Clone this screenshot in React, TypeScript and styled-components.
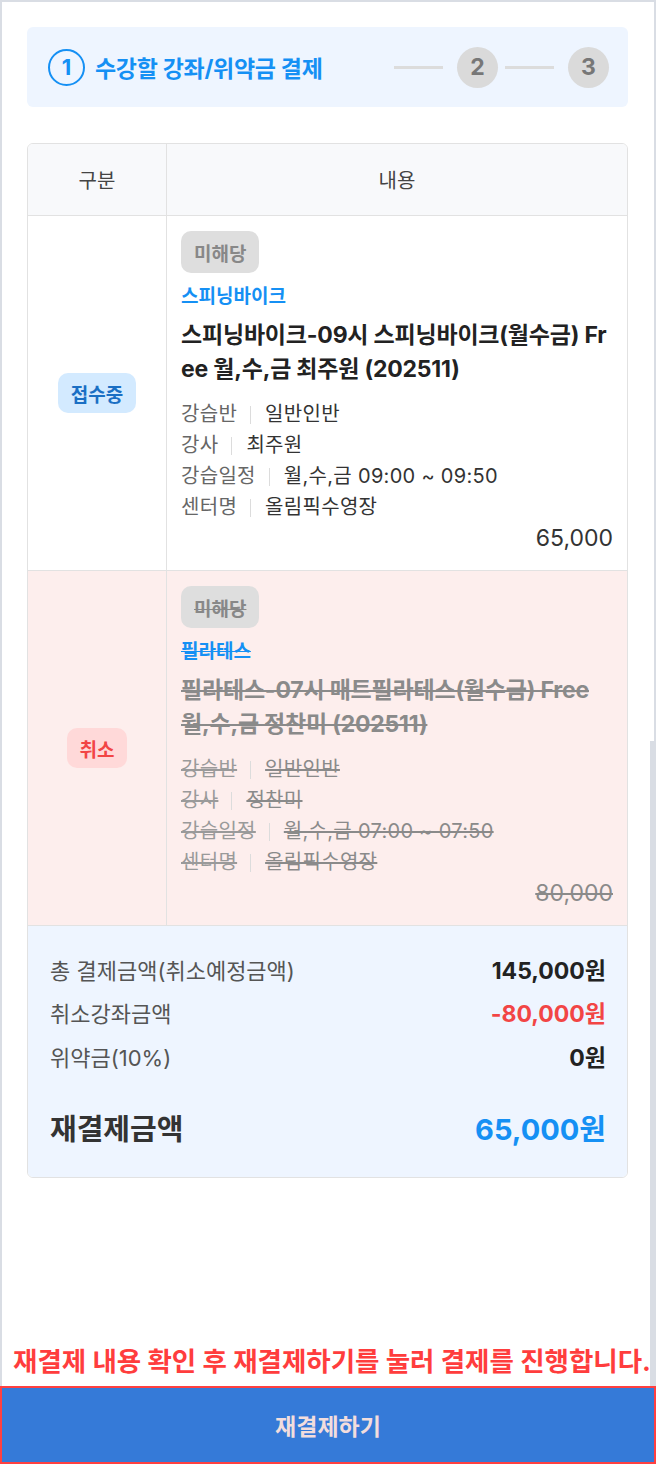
import React from "react";
import styled, { createGlobalStyle, css } from "styled-components";

const GlobalStyle = createGlobalStyle`
  html, body { margin: 0; padding: 0; background: #fff; }
  body { font-family: Inter, "Noto Sans CJK KR", sans-serif; color: #333; }
  * { box-sizing: border-box; }
`;

const BLUE = "#1590f4";
const RED = "#f24545";

const Page = styled.div`
  width: 656px;
  height: 1464px;
  display: flex;
  flex-direction: column;
`;

const Frame = styled.div`
  flex: 1;
  position: relative;
  display: flex;
  flex-direction: column;
  border: 2px solid #d9dde4;
  border-bottom: none;
  padding: 25px 26px 0 25px;
`;

const ScrollThumb = styled.div`
  position: absolute;
  right: 0;
  top: 739px;
  bottom: 0;
  width: 4px;
  background: #d9dde4;
`;

// stepper
const Stepper = styled.div`
  height: 80px;
  border-radius: 6px;
  background: #eef5ff;
  display: flex;
  align-items: center;
  padding: 0 19px 0 21px;
`;

const ActiveStep = styled.div`
  display: flex;
  align-items: center;
  gap: 10px;
  flex: 1;
`;

const ActiveNum = styled.div`
  width: 37px;
  height: 37px;
  border-radius: 50%;
  border: 2.5px solid ${BLUE};
  color: ${BLUE};
  font-size: 22px;
  font-weight: 700;
  display: flex;
  align-items: center;
  justify-content: center;
`;

const StepTitle = styled.div`
  color: ${BLUE};
  font-size: 23px;
  font-weight: 700;
  letter-spacing: -0.3px;
`;

const StepLine = styled.div<{ $first?: boolean }>`
  width: 49px;
  height: 3px;
  background: #dcdcdc;
  margin: 0 14px 0 ${(p) => (p.$first ? "0" : "7px")};
`;

const StepNum = styled.div`
  width: 41px;
  height: 41px;
  border-radius: 50%;
  background: #dadada;
  color: #777;
  font-size: 23px;
  font-weight: 700;
  display: flex;
  align-items: center;
  justify-content: center;
`;

// table
const Table = styled.div`
  margin-top: 36px;
  border: 1px solid #e2e2e2;
  border-radius: 6px;
  overflow: hidden;
`;

const Row = styled.div<{ $tone?: "head" | "cancel" }>`
  display: grid;
  grid-template-columns: 138px 1fr;
  border-bottom: 1px solid #e2e2e2;
  background: ${(p) =>
    p.$tone === "head" ? "#f8f9fb" : p.$tone === "cancel" ? "#fdeeed" : "#fff"};
`;

const HeadCell = styled.div`
  height: 71px;
  display: flex;
  align-items: center;
  justify-content: center;
  font-size: 20px;
  color: #444;
  & + & { border-left: 1px solid #e2e2e2; }
`;

const StatusCell = styled.div`
  display: flex;
  align-items: center;
  justify-content: center;
`;

const StatusBadge = styled.span<{ $cancel?: boolean }>`
  height: 40px;
  padding: 0 13px;
  border-radius: 10px;
  display: inline-flex;
  align-items: center;
  font-size: 19px;
  font-weight: 700;
  background: ${(p) => (p.$cancel ? "#ffd9d9" : "#d3eaff")};
  color: ${(p) => (p.$cancel ? RED : "#1a6fc4")};
`;

const ContentCell = styled.div`
  border-left: 1px solid #e2e2e2;
  padding: 15px 14px 16px 14px;
  display: flex;
  flex-direction: column;
  align-items: flex-start;
`;

const strike = css<{ $struck?: boolean }>`
  text-decoration: ${(p) => (p.$struck ? "line-through" : "none")};
`;

const GrayBadge = styled.span<{ $struck?: boolean }>`
  height: 42px;
  padding: 0 13px;
  border-radius: 10px;
  background: #dedede;
  color: #888;
  font-size: 19px;
  font-weight: 700;
  display: inline-flex;
  align-items: center;
  ${strike}
`;

const Category = styled.div<{ $struck?: boolean }>`
  margin-top: 11px;
  color: ${BLUE};
  font-size: 19px;
  font-weight: 700;
  line-height: 26px;
  ${strike}
`;

const CourseTitle = styled.div<{ $struck?: boolean }>`
  margin-top: 8px;
  font-size: 23px;
  font-weight: 700;
  line-height: 34px;
  letter-spacing: -0.2px;
  word-break: break-all;
  color: ${(p) => (p.$struck ? "#8a8a8a" : "#222")};
  ${strike}
`;

const Details = styled.div`
  margin-top: 13px;
  display: flex;
  flex-direction: column;
`;

const DetailLine = styled.div`
  display: flex;
  align-items: center;
  font-size: 20px;
  line-height: 31px;
  letter-spacing: 0.3px;
`;

const DetailLabel = styled.span<{ $struck?: boolean }>`
  color: ${(p) => (p.$struck ? "#9a9a9a" : "#666")};
  ${strike}
`;

const DetailValue = styled.span<{ $struck?: boolean }>`
  color: ${(p) => (p.$struck ? "#8a8a8a" : "#333")};
  ${strike}
`;

const Divider = styled.span`
  width: 1px;
  height: 18px;
  background: #dcdcdc;
  margin: 0 14px 0 13px;
`;

const Price = styled.div<{ $struck?: boolean }>`
  align-self: stretch;
  text-align: right;
  font-size: 23px;
  line-height: 31px;
  color: ${(p) => (p.$struck ? "#8a8a8a" : "#333")};
  ${strike}
`;

// summary
const Summary = styled.div`
  background: #eef5ff;
  padding: 21px 21px 25px 22px;
`;

const SumRow = styled.div`
  display: flex;
  justify-content: space-between;
  align-items: center;
  height: 43.5px;
`;

const SumLabel = styled.span`
  font-size: 22px;
  color: #555;
`;

const SumValue = styled.span<{ $red?: boolean }>`
  font-size: 23px;
  font-weight: 700;
  color: ${(p) => (p.$red ? RED : "#222")};
`;

const TotalRow = styled.div`
  margin-top: 24px;
  display: flex;
  justify-content: space-between;
  align-items: center;
  height: 50px;
`;

const TotalLabel = styled.span`
  font-size: 29px;
  font-weight: 700;
  color: #333;
`;

const TotalValue = styled.span`
  font-size: 29px;
  font-weight: 700;
  color: ${BLUE};
`;

const Notice = styled.div`
  margin-top: auto;
  padding-bottom: 8px;
  text-align: center;
  color: #ff3d3d;
  font-size: 26.5px;
  font-weight: 700;
  line-height: 34px;
  white-space: nowrap;
  margin-left: -14px;
  margin-right: -16px;
`;

const PayButton = styled.button`
  height: 78px;
  width: 100%;
  border: 2px solid #ff4040;
  background: #357ad8;
  color: #f2dddd;
  font-family: inherit;
  font-size: 23px;
  font-weight: 700;
`;

type Course = {
  status: string;
  cancel?: boolean;
  category: string;
  title: string;
  details: [string, string][];
  price: string;
};

const courses: Course[] = [
  {
    status: "접수중",
    category: "스피닝바이크",
    title: "스피닝바이크-09시 스피닝바이크(월수금) Free 월,수,금 최주원 (202511)",
    details: [
      ["강습반", "일반인반"],
      ["강사", "최주원"],
      ["강습일정", "월,수,금 09:00 ~ 09:50"],
      ["센터명", "올림픽수영장"],
    ],
    price: "65,000",
  },
  {
    status: "취소",
    cancel: true,
    category: "필라테스",
    title: "필라테스-07시 매트필라테스(월수금) Free 월,수,금 정찬미 (202511)",
    details: [
      ["강습반", "일반인반"],
      ["강사", "정찬미"],
      ["강습일정", "월,수,금 07:00 ~ 07:50"],
      ["센터명", "올림픽수영장"],
    ],
    price: "80,000",
  },
];

const CourseRow = ({ c }: { c: Course }) => (
  <Row $tone={c.cancel ? "cancel" : undefined}>
    <StatusCell>
      <StatusBadge $cancel={c.cancel}>{c.status}</StatusBadge>
    </StatusCell>
    <ContentCell>
      <GrayBadge $struck={c.cancel}>미해당</GrayBadge>
      <Category $struck={c.cancel}>{c.category}</Category>
      <CourseTitle $struck={c.cancel}>{c.title}</CourseTitle>
      <Details>
        {c.details.map(([k, v]) => (
          <DetailLine key={k}>
            <DetailLabel $struck={c.cancel}>{k}</DetailLabel>
            <Divider />
            <DetailValue $struck={c.cancel}>{v}</DetailValue>
          </DetailLine>
        ))}
      </Details>
      <Price $struck={c.cancel}>{c.price}</Price>
    </ContentCell>
  </Row>
);

export default function App() {
  return (
    <Page>
      <GlobalStyle />
      <Frame>
        <Stepper>
          <ActiveStep>
            <ActiveNum>1</ActiveNum>
            <StepTitle>수강할 강좌/위약금 결제</StepTitle>
          </ActiveStep>
          <StepLine $first />
          <StepNum>2</StepNum>
          <StepLine />
          <StepNum>3</StepNum>
        </Stepper>

        <Table>
          <Row $tone="head">
            <HeadCell>구분</HeadCell>
            <HeadCell>내용</HeadCell>
          </Row>
          {courses.map((c) => (
            <CourseRow key={c.title} c={c} />
          ))}
          <Summary>
            <SumRow>
              <SumLabel>총 결제금액(취소예정금액)</SumLabel>
              <SumValue>145,000원</SumValue>
            </SumRow>
            <SumRow>
              <SumLabel>취소강좌금액</SumLabel>
              <SumValue $red>-80,000원</SumValue>
            </SumRow>
            <SumRow>
              <SumLabel>위약금(10%)</SumLabel>
              <SumValue>0원</SumValue>
            </SumRow>
            <TotalRow>
              <TotalLabel>재결제금액</TotalLabel>
              <TotalValue>65,000원</TotalValue>
            </TotalRow>
          </Summary>
        </Table>

        <Notice>재결제 내용 확인 후 재결제하기를 눌러 결제를 진행합니다.</Notice>
        <ScrollThumb />
      </Frame>
      <PayButton>재결제하기</PayButton>
    </Page>
  );
}
